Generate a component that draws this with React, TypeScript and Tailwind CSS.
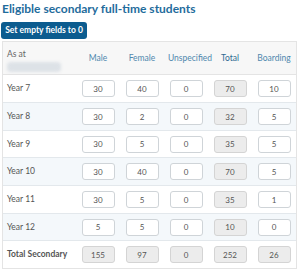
import React from "react";

type Row = { label: string; vals: number[]; total?: boolean };

const rows: Row[] = [
  { label: "Year 7", vals: [30, 40, 0, 70, 10] },
  { label: "Year 8", vals: [30, 2, 0, 32, 5] },
  { label: "Year 9", vals: [30, 5, 0, 35, 5] },
  { label: "Year 10", vals: [30, 40, 0, 70, 5] },
  { label: "Year 11", vals: [30, 5, 0, 35, 1] },
  { label: "Year 12", vals: [5, 5, 0, 10, 0] },
  { label: "Total Secondary", vals: [155, 97, 0, 252, 26], total: true },
];

const heights = ["h-[28px]", "h-[28px]", "h-[27px]", "h-[28px]", "h-[28px]", "h-[27px]", "h-[27px]"];

const font = { fontFamily: "Lato, 'Open Sans', sans-serif" };

export default function App() {
  return (
    <div className="w-[302px] h-[275px] bg-white overflow-hidden" style={font}>
      <div className="pl-[2px] pt-[1px] text-[12px] leading-[16px] font-bold text-[#1f6c9c]">
        Eligible secondary full-time students
      </div>
      <button className="ml-[1px] mt-[5px] h-[17px] w-[86px] rounded-[3px] bg-[#0c5c8f] text-white text-[8.5px] font-bold flex items-center justify-center">
        Set empty fields to 0
      </button>
      <div className="ml-[2px] mt-[2px] w-[295px] border border-[#e4e4e4]">
        <div className="grid grid-cols-[73px_repeat(5,44px)] h-[33px] bg-[#f7f7f7] border-b border-[#e4e4e4] text-[8.5px] text-[#4f88ae]">
          <div className="flex flex-col justify-center pl-[4px] pt-[5px]">
            <div className="text-[#666] leading-[11px]">As at</div>
            <div className="mt-[2px] h-[10px] w-[54px] bg-[#dde2e7] blur-[1.5px] rounded-sm" />
          </div>
          <div className="flex items-center justify-center">Male</div>
          <div className="flex items-center justify-center">Female</div>
          <div className="flex items-center justify-center pl-[8px]">Unspecified</div>
          <div className="flex items-center justify-center text-[#2e6a92]">Total</div>
          <div className="flex items-center justify-center">Boarding</div>
        </div>
        {rows.map((r, i) => (
          <div
            key={r.label}
            className={`grid grid-cols-[73px_repeat(5,44px)] ${heights[i]} ${
              i < rows.length - 1 ? "border-b border-[#e3e8ec]" : ""
            } ${i % 2 === 1 ? "bg-[#f4f8fb]" : "bg-white"}`}
          >
            <div
              className={`flex items-center pl-[4px] text-[8.5px] text-[#555] ${
                r.total ? "font-bold" : ""
              }`}
            >
              {r.label}
            </div>
            {r.vals.map((v, j) => {
              const gray = r.total || j === 3;
              return (
                <div key={j} className="flex items-center justify-center">
                  <div
                    className={`w-[33px] h-[17px] rounded-[3px] border flex items-center justify-center text-[8px] text-[#555] ${
                      gray ? "bg-[#ececec] border-[#d4d4d4]" : "bg-white border-[#cfd4d8]"
                    }`}
                  >
                    {v}
                  </div>
                </div>
              );
            })}
          </div>
        ))}
      </div>
    </div>
  );
}
